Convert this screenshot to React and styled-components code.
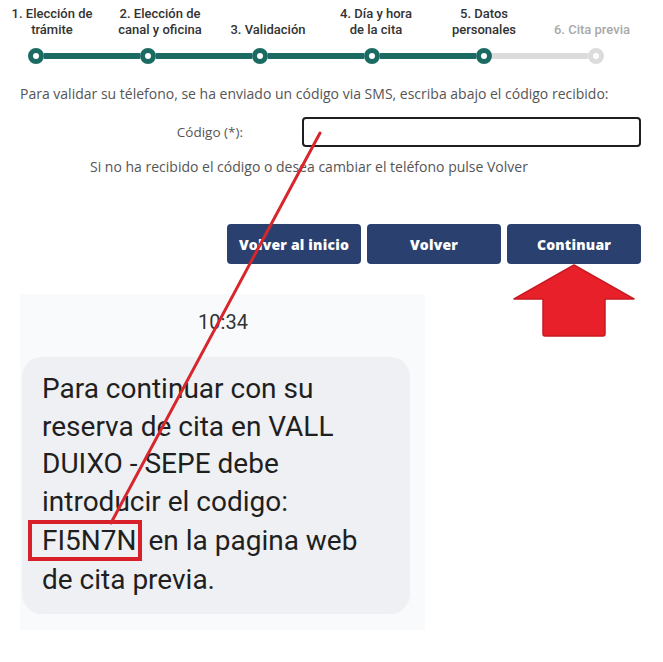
import React from "react";
import styled, { createGlobalStyle } from "styled-components";

const GlobalStyle = createGlobalStyle`
  html, body {
    margin: 0;
    padding: 0;
    background: #ffffff;
  }
  body {
    font-family: "Open Sans", "Noto Sans", sans-serif;
    color: #333;
  }
`;

const Page = styled.div`
  position: relative;
  width: 663px;
  min-height: 662px;
  overflow: hidden;
`;

const Stepper = styled.div`
  padding-top: 6px;
`;

const Labels = styled.div`
  display: grid;
  grid-template-columns: repeat(6, 108px);
  margin-left: -2px;
  height: 31px;
`;

const StepLabel = styled.div`
  display: flex;
  align-items: flex-end;
  justify-content: center;
  text-align: center;
  font-family: "Roboto", "Liberation Sans", sans-serif;
  font-size: 13px;
  font-weight: 500;
  line-height: 15.5px;
  color: ${(p) => (p.$muted ? "#a9a9a9" : "#333")};
  white-space: nowrap;
`;

const Track = styled.div`
  display: flex;
  align-items: center;
  margin: 11px 0 0 28px;
  width: 576px;
`;

const Dot = styled.span`
  box-sizing: border-box;
  flex: none;
  width: 16px;
  height: 16px;
  border-radius: 50%;
  background: #fff;
  border: 5px solid ${(p) => (p.$done ? "#1b6b63" : "#dcdcdc")};
`;

const Segment = styled.span`
  flex: 1;
  height: 6px;
  background: ${(p) => (p.$done ? "#1b6b63" : "#dcdcdc")};
`;

const Intro = styled.p`
  margin: 21px 0 0;
  padding-left: 20px;
  font-size: 14px;
  line-height: 18px;
  color: #555;
  white-space: nowrap;
`;

const FieldRow = styled.div`
  display: flex;
  align-items: center;
  margin-top: 14px;
`;

const FieldLabel = styled.label`
  width: 302px;
  padding-right: 59px;
  box-sizing: border-box;
  text-align: right;
  font-size: 13.5px;
  color: #555;
`;

const CodeInput = styled.input`
  box-sizing: border-box;
  width: 339px;
  height: 30px;
  border: 2px solid #1e1e1e;
  border-radius: 4px;
  background: #fff;
  outline: none;
`;

const Note = styled.p`
  margin: 11px 0 0;
  padding-left: 90px;
  font-size: 14px;
  line-height: 18px;
  color: #555;
  white-space: nowrap;
`;

const Actions = styled.div`
  display: flex;
  justify-content: flex-end;
  gap: 6px;
  margin-top: 48px;
  padding-right: 22px;
`;

const Button = styled.button`
  width: 134px;
  height: 40px;
  border: none;
  border-radius: 4px;
  background: #2a4170;
  color: #fff;
  font-family: "Open Sans", "Liberation Sans", sans-serif;
  font-size: 14px;
  font-weight: 800;
  letter-spacing: 0.2px;
  cursor: pointer;
`;

const Bottom = styled.div`
  display: flex;
  align-items: flex-start;
`;

const Phone = styled.div`
  margin: 30px 0 0 20px;
  width: 405px;
  box-sizing: border-box;
  padding: 16px 15px 16px 2px;
  background: #f9fafc;
  font-family: "Roboto", "Liberation Sans", sans-serif;
`;

const Time = styled.div`
  text-align: center;
  font-size: 20px;
  line-height: 24px;
  color: #333;
  padding-left: 14px;
`;

const Bubble = styled.div`
  margin-top: 23px;
  padding: 13px 10px 15px 20px;
  border-radius: 20px;
  background: #eef0f3;
  font-size: 28px;
  line-height: 37.6px;
  color: #1f1f1f;
  white-space: nowrap;
`;

const Code = styled.span`
  display: inline-block;
  line-height: 33px;
  margin-left: -14px;
  padding: 0 1px 0 10px;
  border: 4px solid #d7202a;
`;

const ArrowWrap = styled.div`
  margin-left: 87px;
  width: 124px;
  height: 73px;
`;

const Overlay = styled.svg`
  position: absolute;
  left: 0;
  top: 0;
  pointer-events: none;
`;

const steps = [
  ["1. Elección de", "trámite"],
  ["2. Elección de", "canal y oficina"],
  ["3. Validación"],
  ["4. Día y hora", "de la cita"],
  ["5. Datos", "personales"],
  ["6. Cita previa"],
];

const App = () => {
  const current = 4;
  return (
    <Page>
      <GlobalStyle />
      <Stepper>
        <Labels>
          {steps.map((lines, i) => (
            <StepLabel key={i} $muted={i > current}>
              <span>
                {lines.map((l, j) => (
                  <React.Fragment key={j}>
                    {j > 0 && <br />}
                    {l}
                  </React.Fragment>
                ))}
              </span>
            </StepLabel>
          ))}
        </Labels>
        <Track>
          {steps.map((_, i) => (
            <React.Fragment key={i}>
              {i > 0 && <Segment $done={i <= current} />}
              <Dot $done={i <= current} />
            </React.Fragment>
          ))}
        </Track>
      </Stepper>

      <Intro>
        Para validar su télefono, se ha enviado un código via SMS, escriba
        abajo el código recibido:
      </Intro>
      <FieldRow>
        <FieldLabel>Código (*):</FieldLabel>
        <CodeInput type="text" />
      </FieldRow>
      <Note>
        Si no ha recibido el código o desea cambiar el teléfono pulse Volver
      </Note>

      <Actions>
        <Button>Volver al inicio</Button>
        <Button>Volver</Button>
        <Button>Continuar</Button>
      </Actions>

      <Bottom>
        <Phone>
          <Time>10:34</Time>
          <Bubble>
            Para continuar con su
            <br />
            reserva de cita en VALL
            <br />
            DUIXO - SEPE debe
            <br />
            introducir el codigo:
            <br />
            <Code>FI5N7N</Code> en la pagina web
            <br />
            de cita previa.
          </Bubble>
        </Phone>
        <ArrowWrap>
          <svg width="124" height="73" viewBox="0 0 124 73">
            <path
              d="M62 1 L122 35 L93 35 L93 70 Q93 72 91 72 L33 72 Q31 72 31 70 L31 35 L2 35 Z"
              fill="#e8202a"
              stroke="#c81a22"
              strokeWidth="1.5"
              strokeLinejoin="round"
            />
          </svg>
        </ArrowWrap>
      </Bottom>

      <Overlay width="663" height="662">
        <line
          x1="320"
          y1="133"
          x2="111"
          y2="523"
          stroke="#d7262c"
          strokeWidth="3"
          strokeLinecap="round"
        />
      </Overlay>
    </Page>
  );
};

export default App;
